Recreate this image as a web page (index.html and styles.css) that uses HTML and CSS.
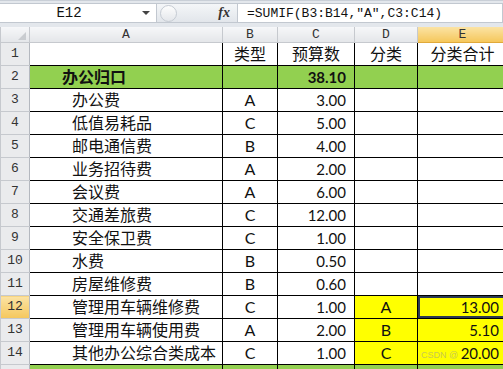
FILE: index.html
```html
<!DOCTYPE html>
<html lang="zh-CN">
<head>
  <meta charset="UTF-8">
  <title>办公归口 - 分类合计</title>
  <link rel="stylesheet" href="styles.css">
</head>
<body>
  <div class="excel">
    <div class="formula-bar">
      <div class="name-box">
        <span class="cell-ref">E12</span>
        <span class="arrow"></span>
      </div>
      <div class="bar-mid">
        <span class="grip"></span>
        <span class="fx">fx</span>
      </div>
      <div class="formula">=SUMIF(B3:B14,"A",C3:C14)</div>
    </div>

    <table class="sheet">
      <colgroup>
        <col class="c-head">
        <col class="c-a">
        <col class="c-b">
        <col class="c-c">
        <col class="c-d">
        <col class="c-e">
      </colgroup>
      <thead>
        <tr>
          <th class="corner"><span class="tri"></span></th>
          <th>A</th>
          <th>B</th>
          <th>C</th>
          <th>D</th>
          <th class="active">E</th>
        </tr>
      </thead>
      <tbody>
        <tr>
          <th>1</th>
          <td></td>
          <td class="mid">类型</td>
          <td class="mid">预算数</td>
          <td class="mid">分类</td>
          <td class="mid">分类合计</td>
        </tr>
        <tr class="green">
          <th>2</th>
          <td class="title">办公归口</td>
          <td></td>
          <td class="num bold">38.10</td>
          <td></td>
          <td></td>
        </tr>
        <tr><th>3</th><td class="item">办公费</td><td class="mid">A</td><td class="num">3.00</td><td></td><td></td></tr>
        <tr><th>4</th><td class="item">低值易耗品</td><td class="mid">C</td><td class="num">5.00</td><td></td><td></td></tr>
        <tr><th>5</th><td class="item">邮电通信费</td><td class="mid">B</td><td class="num">4.00</td><td></td><td></td></tr>
        <tr><th>6</th><td class="item">业务招待费</td><td class="mid">A</td><td class="num">2.00</td><td></td><td></td></tr>
        <tr><th>7</th><td class="item">会议费</td><td class="mid">A</td><td class="num">6.00</td><td></td><td></td></tr>
        <tr><th>8</th><td class="item">交通差旅费</td><td class="mid">C</td><td class="num">12.00</td><td></td><td></td></tr>
        <tr><th>9</th><td class="item">安全保卫费</td><td class="mid">C</td><td class="num">1.00</td><td></td><td></td></tr>
        <tr><th>10</th><td class="item">水费</td><td class="mid">B</td><td class="num">0.50</td><td></td><td></td></tr>
        <tr><th>11</th><td class="item">房屋维修费</td><td class="mid">B</td><td class="num">0.60</td><td></td><td></td></tr>
        <tr>
          <th class="active">12</th>
          <td class="item">管理用车辆维修费</td>
          <td class="mid">C</td>
          <td class="num">1.00</td>
          <td class="mid yellow">A</td>
          <td class="num yellow selected">13.00</td>
        </tr>
        <tr>
          <th>13</th>
          <td class="item">管理用车辆使用费</td>
          <td class="mid">A</td>
          <td class="num">2.00</td>
          <td class="mid yellow">B</td>
          <td class="num yellow">5.10</td>
        </tr>
        <tr>
          <th>14</th>
          <td class="item">其他办公综合类成本</td>
          <td class="mid">C</td>
          <td class="num">1.00</td>
          <td class="mid yellow">C</td>
          <td class="num yellow">20.00</td>
        </tr>
        <tr class="green">
          <th></th>
          <td></td><td></td><td></td><td></td><td></td>
        </tr>
      </tbody>
    </table>

    <div class="watermark">CSDN @</div>
  </div>
</body>
</html>
```

FILE: styles.css
```css
/* Spreadsheet look, Excel 2010 style */
body {
  margin: 0;
  padding: 0;
  background: #fff;
  overflow: hidden;
}

.excel {
  position: relative;
  width: 503px;
  height: 369px;
  overflow: hidden;
  background: #e3e7ec;
}

/* Formula bar */
.formula-bar {
  display: flex;
  height: 27px;
  box-sizing: border-box;
  padding: 2px 0 4px 0;
  border-top: 1px solid #c9cfd7;
  background: #e3e7ec;
}

.name-box {
  display: flex;
  align-items: center;
  width: 157px;
  background: #fff;
  border: 1px solid #c2c8d0;
  border-left: none;
  box-sizing: border-box;
}

.cell-ref {
  flex: 1;
  text-align: center;
  font-family: "Liberation Mono", monospace;
  font-size: 14px;
  color: #111;
  padding-right: 4px;
}

.arrow {
  width: 0;
  height: 0;
  margin-right: 6px;
  border-left: 4px solid transparent;
  border-right: 4px solid transparent;
  border-top: 4px solid #444;
}

.bar-mid {
  display: flex;
  align-items: center;
  width: 80px;
  background: linear-gradient(#f4f6f8, #e2e6eb);
  border-top: 1px solid #c2c8d0;
  border-bottom: 1px solid #c2c8d0;
  box-sizing: border-box;
}

.grip {
  width: 17px;
  height: 17px;
  margin-left: 3px;
  border-radius: 50%;
  border: 1px solid #c5cbd3;
  background: linear-gradient(#fdfdfd, #e4e7eb);
  box-sizing: border-box;
}

.fx {
  margin-left: auto;
  margin-right: 7px;
  font-family: "Liberation Serif", serif;
  font-style: italic;
  font-weight: bold;
  font-size: 14px;
  color: #333;
}

.formula {
  flex: 1;
  display: flex;
  align-items: center;
  padding-left: 9px;
  background: #fff;
  border: 1px solid #c2c8d0;
  font-family: "Liberation Mono", monospace;
  font-size: 13px;
  color: #111;
}

/* Grid */
.sheet {
  border-collapse: collapse;
  table-layout: fixed;
  width: 507px;
  background: #fff;
}

.c-head { width: 29px; }
.c-a { width: 193px; }
.c-b { width: 55px; }
.c-c { width: 77px; }
.c-d { width: 63px; }
.c-e { width: 90px; }

.sheet th {
  font-family: "Liberation Mono", monospace;
  font-weight: normal;
  font-size: 13px;
  line-height: 14px;
  color: #333;
  padding: 0;
}

.sheet thead th {
  height: 15px;
  background: linear-gradient(#f6f7f9, #e4e6e9);
  border: 1px solid #c6c9ce;
  border-top: none;
}

.sheet thead th.active {
  background: linear-gradient(#fbe3a4, #f5c75c);
  border-bottom-color: #e0a93a;
}

.corner {
  position: relative;
}

.tri {
  position: absolute;
  right: 3px;
  bottom: 2px;
  width: 0;
  height: 0;
  border-left: 8px solid transparent;
  border-bottom: 8px solid #c9ccd0;
}

.sheet tbody tr {
  height: 23px;
}

.sheet tbody th {
  background: #eaebed;
  border: 1px solid #c6c9ce;
  border-right-color: #b4b8bf;
}

.sheet tbody th.active {
  background: linear-gradient(#fbe3a4, #f5c75c);
}

.sheet td {
  padding: 0 8px;
  border: 1px solid #000;
  font-family: "Lato", "Noto Sans CJK SC", sans-serif;
  font-size: 16px;
  line-height: 18px;
  color: #111;
  white-space: nowrap;
  overflow: hidden;
}

.sheet tbody tr:first-child td {
  border-top-color: #c6c9ce;
}

.sheet td.mid {
  text-align: center;
}

.sheet td.num {
  text-align: right;
  font-size: 15px;
}

.sheet td.bold {
  font-weight: bold;
}

.sheet td.title {
  padding-left: 32px;
  font-weight: bold;
}

.sheet td.item {
  padding-left: 42px;
}

.sheet .green td {
  background: #92d050;
}

.sheet td.yellow {
  background: #ffff00;
}

.sheet td.selected {
  box-shadow: inset 0 0 0 2px #2b3a52;
}

.watermark {
  position: absolute;
  left: 421px;
  top: 350px;
  font-family: "Liberation Sans", sans-serif;
  font-size: 9px;
  color: rgba(150, 150, 150, 0.55);
}
```
